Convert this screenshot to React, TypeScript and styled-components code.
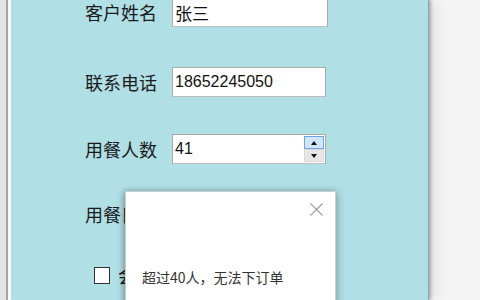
import React from 'react';
import styled, { createGlobalStyle } from 'styled-components';

const GlobalStyle = createGlobalStyle`
    html, body {
        margin: 0;
        padding: 0;
        background: #f4f4f4;
    }
    body {
        font-family: "Noto Sans CJK SC", "Noto Sans", sans-serif;
    }
`

const Screen = styled.div`
    display: flex;
    width: 480px;
    height: 300px;
    overflow: hidden;
    background: #f4f4f4;
`

const WindowEdge = styled.div`
    width: 11px;
    flex-shrink: 0;
    background: linear-gradient(to right,
        #e4e4e4 0, #e4e4e4 6px,
        #a6a6a6 6px, #a6a6a6 8px,
        #fbfbfb 8px, #fbfbfb 11px);
`

const Panel = styled.div`
    position: relative;
    width: 417px;
    flex-shrink: 0;
    background: #b0dfe5;
    box-shadow: 1px 0 0 #8fa3a6, 3px 0 3px rgba(0, 0, 0, 0.25), 8px 0 12px rgba(0, 0, 0, 0.08);
`

const Form = styled.div`
    display: flex;
    flex-direction: column;
    padding-left: 74px;
    margin-top: -3px;
`

const Row = styled.div<{ $top: number }>`
    display: flex;
    align-items: center;
    height: 30px;
    margin-top: ${p => p.$top}px;
`

const Label = styled.span`
    width: 87px;
    font-size: 18px;
    line-height: 30px;
    color: #1a1a1a;
    white-space: nowrap;
`

const TextBox = styled.div<{ $width: number }>`
    display: flex;
    align-items: center;
    box-sizing: border-box;
    width: ${p => p.$width}px;
    height: 30px;
    padding-left: 2px;
    background: #fff;
    border: 1px solid #a9a9a9;
    border-bottom-color: #bdbdbd;
    font-size: 17px;
    color: #111;
`

const Digits = styled.span`
    font-family: "Liberation Sans", "Noto Sans", sans-serif;
    font-size: 16px;
`

const Spinner = styled.div`
    display: flex;
    flex-direction: column;
    margin-left: auto;
    margin-right: 1px;
    width: 20px;
    height: 26px;
`

const SpinButton = styled.div<{ $hot?: boolean }>`
    flex: 1;
    display: flex;
    align-items: center;
    justify-content: center;
    box-sizing: border-box;
    background: ${p => (p.$hot ? '#cfe6fa' : '#e6e6e6')};
    border: 1px solid ${p => (p.$hot ? '#6aa6e8' : '#dadada')};
`

const Arrow = styled.span<{ $down?: boolean }>`
    width: 0;
    height: 0;
    border-left: 3px solid transparent;
    border-right: 3px solid transparent;
    ${p => (p.$down ? 'border-top: 4px solid #111;' : 'border-bottom: 4px solid #111;')}
`

const CheckRow = styled.div`
    display: flex;
    align-items: center;
    gap: 8px;
    margin-top: 33px;
    margin-left: 9px;
`

const CheckBox = styled.span`
    display: block;
    width: 14px;
    height: 15px;
    background: #fff;
    border: 1px solid #333;
`

const CheckText = styled.span`
    font-size: 18px;
    color: #1a1a1a;
`

const Dialog = styled.div`
    position: absolute;
    left: 114px;
    top: 191px;
    width: 211px;
    height: 130px;
    box-sizing: border-box;
    background: #fff;
    border: 1px solid #c8d2d4;
    box-shadow: -2px 0 6px rgba(0, 0, 0, 0.25), 2px 2px 8px rgba(0, 0, 0, 0.2);
    display: flex;
    flex-direction: column;
`

const DialogHeader = styled.div`
    display: flex;
    justify-content: flex-end;
    padding: 11px 12px 0 0;
`

const CloseButton = styled.svg`
    display: block;
`

const Message = styled.div`
    margin-top: 51px;
    padding-left: 16px;
    font-size: 14px;
    color: #333;
    white-space: nowrap;
`

function App(): JSX.Element {
    return (
        <Screen>
            <GlobalStyle />
            <WindowEdge />
            <Panel>
                <Form>
                    <Row $top={0}>
                        <Label>客户姓名</Label>
                        <TextBox $width={156}>张三</TextBox>
                    </Row>
                    <Row $top={40}>
                        <Label>联系电话</Label>
                        <TextBox $width={154}><Digits>18652245050</Digits></TextBox>
                    </Row>
                    <Row $top={37}>
                        <Label>用餐人数</Label>
                        <TextBox $width={154}>
                            <Digits>41</Digits>
                            <Spinner>
                                <SpinButton $hot><Arrow /></SpinButton>
                                <SpinButton><Arrow $down /></SpinButton>
                            </Spinner>
                        </TextBox>
                    </Row>
                    <Row $top={35}>
                        <Label>用餐日期</Label>
                    </Row>
                    <CheckRow>
                        <CheckBox />
                        <CheckText>会员</CheckText>
                    </CheckRow>
                </Form>
                <Dialog>
                    <DialogHeader>
                        <CloseButton width="13" height="13" viewBox="0 0 13 13">
                            <path d="M0.5 0.5 L12.5 12.5 M12.5 0.5 L0.5 12.5" stroke="#a0a0a0" strokeWidth="1.2" fill="none" />
                        </CloseButton>
                    </DialogHeader>
                    <Message>超过40人，无法下订单</Message>
                </Dialog>
            </Panel>
        </Screen>
    );
}

export default App
